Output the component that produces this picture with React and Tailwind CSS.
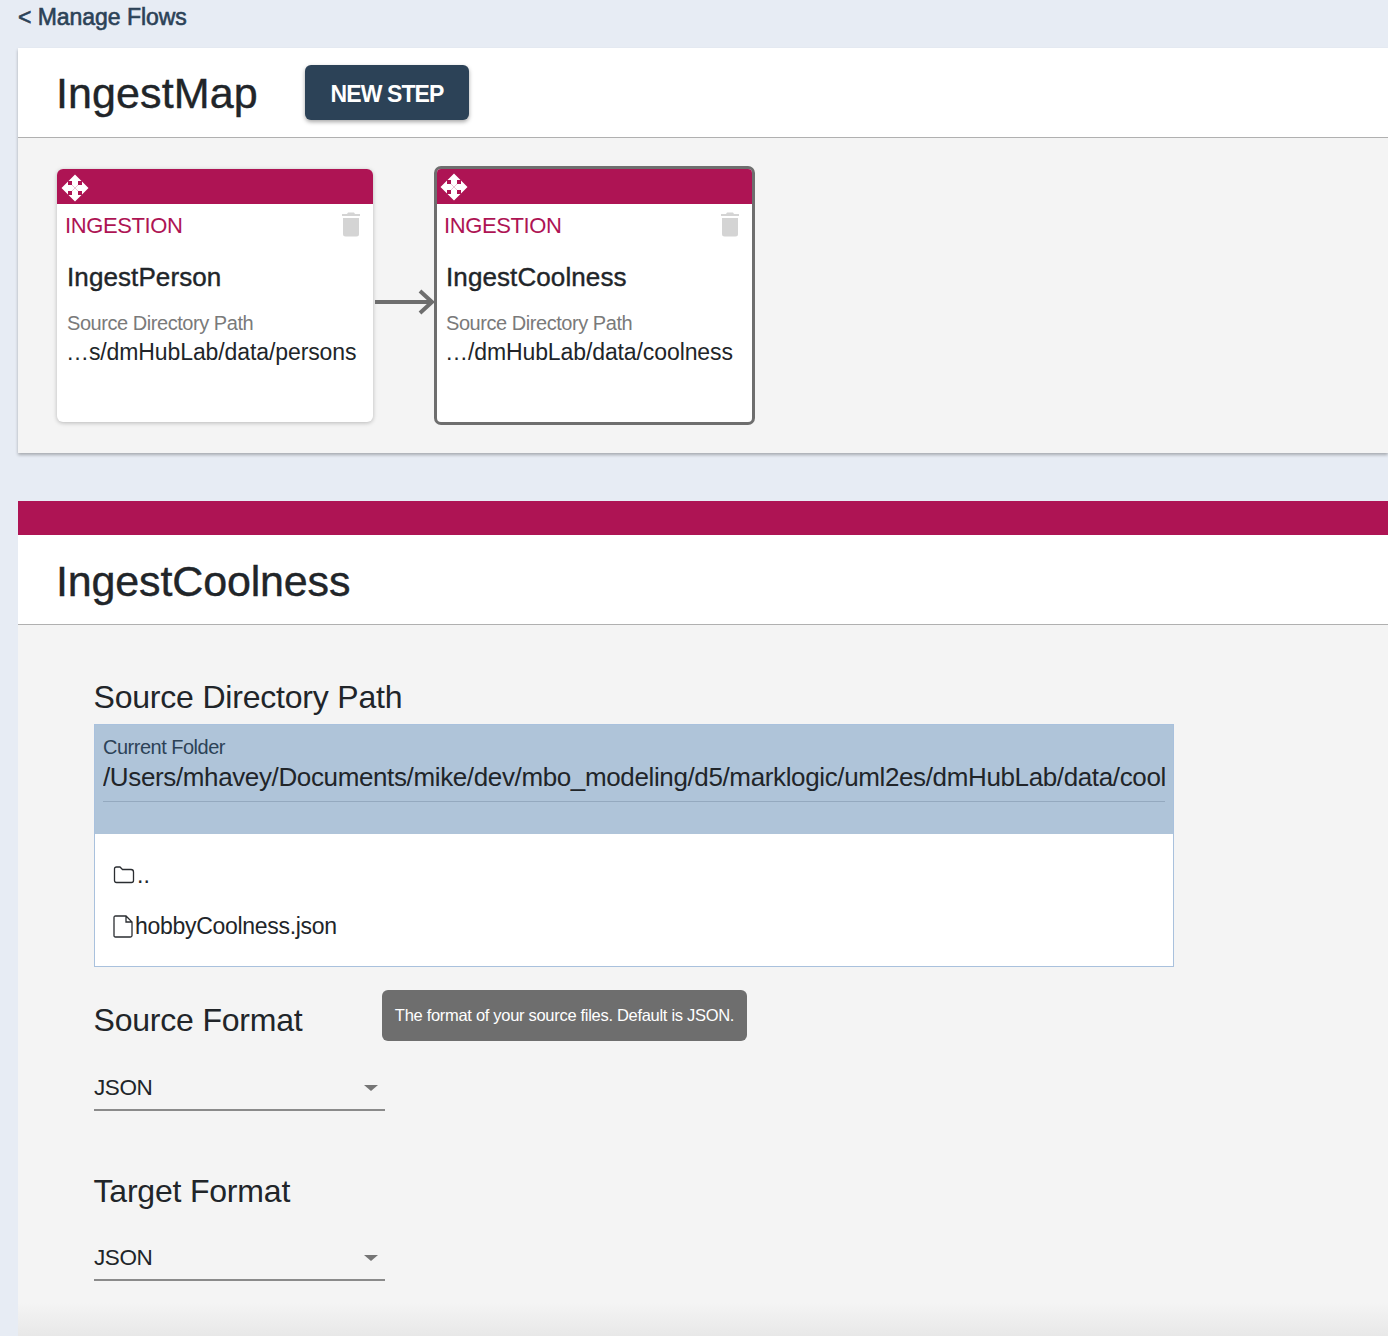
const sans = "font-['Liberation_Sans',Arial,sans-serif]";

const MoveIcon = () => (
  <svg width="28" height="28" viewBox="0 0 28 28" className="block">
    <path fill="#fff" d="M14 0.5 L20.5 7 H17 V11 L14 14 L11 11 V7 H7.5 Z" />
    <path fill="#fff" d="M14 27.5 L7.5 21 H11 V17 L14 14 L17 17 V21 H20.5 Z" />
    <path fill="#fff" d="M0.5 14 L7 7.5 V11 H11 L14 14 L11 17 H7 V20.5 Z" />
    <path fill="#fff" d="M27.5 14 L21 20.5 V17 H17 L14 14 L17 11 H21 V7.5 Z" />
  </svg>
);

const TrashIcon = () => (
  <svg width="20" height="25" viewBox="0 0 20 25" className="block">
    <path fill="#d4d4d4" d="M7 0.5 H13 L14 2 H19 V4 H1 V2 H6 Z" />
    <path fill="#d4d4d4" d="M2 6 H18 V22 Q18 24.5 15.5 24.5 H4.5 Q2 24.5 2 22 Z" />
  </svg>
);

const FolderIcon = () => (
  <svg width="22" height="18" viewBox="0 0 22 18" className="block">
    <path fill="none" stroke="#2a2d31" strokeWidth="1.3" d="M1.5 3 Q1.5 1 3.5 1 H7 L9.5 3.5 H18 Q20.5 3.5 20.5 6 V14.5 Q20.5 16.5 18.5 16.5 H3.5 Q1.5 16.5 1.5 14.5 Z" />
  </svg>
);

const FileIcon = () => (
  <svg width="20" height="23" viewBox="0 0 20 23" className="block">
    <path fill="none" stroke="#2a2d31" strokeWidth="1.3" d="M2.5 1 H13 L19 7 V20.5 Q19 22 17.5 22 H2.5 Q1 22 1 20.5 V2.5 Q1 1 2.5 1 Z M13 1 V7 H19" />
  </svg>
);

const StepCard = ({ name, path, selected }) => (
  <div
    className={
      selected
        ? "w-[321px] h-[259px] rounded-[7px] border-[3px] border-[#6e6e6e] bg-white overflow-hidden"
        : "w-[316px] h-[253px] mt-[3px] rounded-[6px] bg-white overflow-hidden shadow-[0_1px_4px_rgba(0,0,0,0.25)]"
    }
  >
    <div className={selected ? "h-[35px] bg-[#ae1454] pl-[3px] pt-[4px]" : "h-[35px] bg-[#ae1454] pl-[4px] pt-[5px]"}>
      <MoveIcon />
    </div>
    <div className={selected ? "pl-[7px] pr-[12px]" : "pl-[8px] pr-[12px]"}>
      <div className="flex items-start justify-between h-[44px] pt-[7px]">
        <span className="text-[22px] leading-[29px] tracking-[-0.4px] text-[#ae1454]">INGESTION</span>
        <div className="pt-[1px]"><TrashIcon /></div>
      </div>
      <div className="pl-[2px] text-[26px] leading-[32px] mt-[13px] tracking-[0.1px] text-[#212529] [-webkit-text-stroke:0.4px_#212529]">
        {name}
      </div>
      <div className="pl-[2px] text-[20px] leading-[24px] mt-[18px] tracking-[-0.45px] text-[#7a7a7a]">Source Directory Path</div>
      <div className="pl-[1px] text-[23px] leading-[28px] mt-[3px] text-[#212529] whitespace-nowrap tracking-[-0.1px]">{path}</div>
    </div>
  </div>
);

const FormatSelect = () => (
  <div className="w-[291px] h-[40px] border-b-2 border-[#8a8a8a] flex items-center justify-between pr-[7px]">
    <span className="pb-[4px] text-[22.5px] tracking-[-0.4px] text-[#212529]">JSON</span>
    <span className="w-0 h-0 border-x-[7px] border-x-transparent border-t-[6px] border-t-[#757575] mb-[5px]" />
  </div>
);

export default function App() {
  return (
    <div className={`${sans} min-h-[1336px] h-[1336px] overflow-hidden bg-[#e7ecf4] pl-[18px]`}>
      <div className="h-[48px] pt-[3px]">
        <a className="text-[23px] leading-[28px] tracking-[-0.05px] text-[#2c4257] [-webkit-text-stroke:0.6px_#2c4257]">&lt; Manage Flows</a>
      </div>

      <section className="bg-[#f4f4f4] shadow-[0_2px_3px_rgba(0,0,0,0.28)] h-[405px]">
        <div className="h-[90px] bg-white border-b border-[#b0b0b0] pl-[38px] flex items-start">
          <h1 className="text-[43px] leading-[90px] tracking-[0.1px] text-[#212529] w-[249px] [-webkit-text-stroke:0.4px_#212529]">IngestMap</h1>
          <button className="mt-[17px] pt-[3px] w-[164px] h-[55px] rounded-[6px] bg-[#2c4257] text-white text-[23px] font-bold tracking-[-0.9px] shadow-[0_2px_4px_rgba(0,0,0,0.35)]">
            NEW STEP
          </button>
        </div>
        <div className="flex items-start pl-[39px] pt-[28px]">
          <StepCard name="IngestPerson" path="…s/dmHubLab/data/persons" />
          <div className="w-[61px] pt-[123px] pl-[2px]">
            <svg width="60" height="26" viewBox="0 0 60 26" className="block">
              <path d="M0 13 H56" stroke="#6e6e6e" strokeWidth="4" fill="none" />
              <path d="M45 2 L57 13 L45 24" stroke="#6e6e6e" strokeWidth="4" fill="none" />
            </svg>
          </div>
          <StepCard name="IngestCoolness" path="…/dmHubLab/data/coolness" selected />
        </div>
      </section>

      <section className="mt-[48px] h-[835px] bg-[linear-gradient(to_bottom,#f4f4f4_0,#f4f4f4_96%,#e8e8e8_100%)]">
        <div className="h-[34px] bg-[#ae1454]" />
        <div className="h-[90px] bg-white border-b border-[#b0b0b0] pl-[38px]">
          <h2 className="text-[43px] leading-[93px] tracking-[-0.15px] text-[#212529] [-webkit-text-stroke:0.4px_#212529]">IngestCoolness</h2>
        </div>

        <div className="pl-[76px] pt-[52px]">
          <h3 className="-ml-[0.5px] text-[32px] leading-[40px] tracking-[-0.2px] text-[#212529]">Source Directory Path</h3>
          <div className="mt-[7px] w-[1080px] h-[243px] border border-[#a9c1dd] bg-white">
            <div className="h-[109px] bg-[#afc4d9] px-[8px] pt-[10px]">
              <div className="text-[20px] leading-[24px] tracking-[-0.5px] text-[#2c4257]">Current Folder</div>
              <div className="h-[43px] border-b border-[#94a9bf] text-[26px] leading-[36px] tracking-[-0.37px] text-[#212529] whitespace-nowrap overflow-hidden">
                /Users/mhavey/Documents/mike/dev/mbo_modeling/d5/marklogic/uml2es/dmHubLab/data/cool
              </div>
            </div>
            <div className="pl-[18px] pt-[27px] text-[23px] text-[#212529]">
              <div className="flex items-center h-[28px]">
                <FolderIcon />
                <span className="ml-[2px] leading-[28px]">..</span>
              </div>
              <div className="flex items-center h-[28px] mt-[23px]">
                <FileIcon />
                <span className="ml-[2px] leading-[28px] tracking-[-0.3px]">hobbyCoolness.json</span>
              </div>
            </div>
          </div>

          <div className="flex items-start mt-[23px]">
            <h3 className="-ml-[0.5px] w-[288.5px] mt-[10px] text-[32px] leading-[40px] tracking-[-0.2px] text-[#212529]">Source Format</h3>
            <div className="w-[365px] h-[51px] rounded-[6px] bg-[#6e6e6e] text-white text-[16.5px] leading-[50px] text-center tracking-[-0.3px] whitespace-nowrap">
              The format of your source files. Default is JSON.
            </div>
          </div>
          <div className="mt-[30px]"><FormatSelect /></div>

          <h3 className="-ml-[0.5px] mt-[60px] text-[32px] leading-[40px] tracking-[-0.2px] text-[#212529]">Target Format</h3>
          <div className="mt-[30px]"><FormatSelect /></div>
        </div>
      </section>
    </div>
  );
}
